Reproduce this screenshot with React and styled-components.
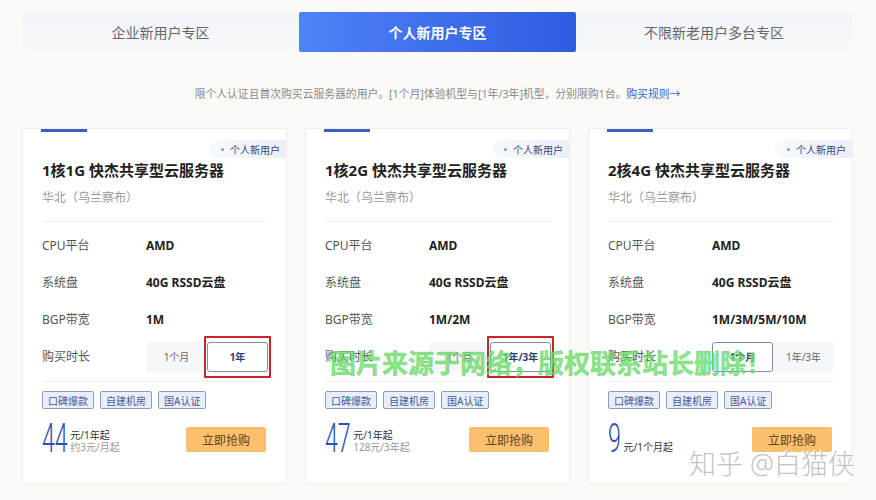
import React from 'react'
import styled, { createGlobalStyle } from 'styled-components'

const GlobalStyle = createGlobalStyle`
  body {
    margin: 0;
    background: #fbfaf7;
    font-family: 'Noto Sans', 'Noto Sans CJK SC', sans-serif;
  }
`
const Page = styled.div`
  position: relative;
  width: 876px;
  height: 500px;
  padding: 12px 23px 0 22px;
  box-sizing: border-box;
  overflow: hidden;
`
const Tabs = styled.div`
  display: grid;
  grid-template-columns: 277px 277px 1fr;
  height: 40px;
  width: 830px;
`
const Tab = styled.div`
  display: flex;
  align-items: center;
  justify-content: center;
  font-size: 14px;
  border-radius: 2px;
  color: ${(props) => (props.$active ? '#fff' : '#666')};
  font-weight: ${(props) => (props.$active ? 700 : 400)};
  background: ${(props) =>
    props.$active
      ? 'linear-gradient(90deg, #4e82f7, #2d5de0)'
      : 'linear-gradient(180deg, #f3f5fa, #f7f8fb)'};
`
const Notice = styled.p`
  margin: 34px 0 0;
  text-align: center;
  font-size: 10.8px;
  line-height: 16px;
  color: #8a8a8a;

  a {
    color: #3b64d0;
    text-decoration: none;
  }
`
const Cards = styled.div`
  display: grid;
  grid-template-columns: repeat(3, 265px);
  column-gap: 18px;
  margin-top: 26px;
`
const Card = styled.div`
  position: relative;
  background: #fff;
  border: 1px solid #f0efec;
  padding: 0 18px 29px 19px;
`
const Accent = styled.div`
  width: 46px;
  height: 3px;
  margin-left: -1px;
  background: #3d5fc4;
`
const Badge = styled.div`
  position: absolute;
  top: 11px;
  right: 0;
  height: 18px;
  padding: 0 6px 0 12px;
  display: flex;
  align-items: center;
  gap: 6px;
  border-radius: 9px 0 0 9px;
  background: linear-gradient(90deg, #f7f9fd, #eaeff9);
  font-size: 10px;
  color: #34457a;

  &::before {
    content: '';
    width: 3px;
    height: 3px;
    border-radius: 50%;
    background: #8a97b8;
  }
`
const Title = styled.h3`
  margin: 28px 0 0;
  font-size: 15px;
  line-height: 20px;
  font-weight: 700;
  color: #222;
`
const Region = styled.div`
  margin-top: 9px;
  font-size: 12px;
  line-height: 18px;
  color: #9a9a9a;
`
const Specs = styled.div`
  margin-top: 14px;
  padding: 5px 0 6px;
  border-top: 1px solid #f1f1f1;
  border-bottom: 1px solid #f1f1f1;
`
const Row = styled.div`
  display: flex;
  align-items: center;
  height: 37px;
  font-size: 12px;
  line-height: 16px;
`
const Label = styled.span`
  width: 104px;
  color: #555;
`
const Value = styled.span`
  font-weight: 700;
  color: #222;
`
const Segmented = styled.div`
  display: grid;
  grid-template-columns: 1fr 1fr;
  width: 122px;
  height: 30px;
  background: #f5f7fb;
  border-radius: 3px;
`
const Segment = styled.div`
  position: relative;
  display: flex;
  align-items: center;
  justify-content: center;
  font-size: 10px;
  border-radius: 3px;
  color: ${(props) => (props.$on ? '#2f4270' : '#666')};
  font-weight: ${(props) => (props.$on ? 700 : 400)};
  background: ${(props) => (props.$on ? '#fff' : 'transparent')};
  border: 1px solid ${(props) => (props.$on ? '#7f8db0' : 'transparent')};

  /* red highlight frame drawn around the chosen term */
  &::after {
    content: '';
    display: ${(props) => (props.$marked ? 'block' : 'none')};
    position: absolute;
    inset: -7px -4px -7px -4px;
    border: 2px solid #c4262b;
    border-radius: 1px;
  }
`
const Tags = styled.div`
  display: flex;
  gap: 6px;
  margin-top: 9px;
`
const Tag = styled.span`
  height: 16px;
  padding: 0 5px;
  display: flex;
  align-items: center;
  font-size: 10px;
  color: #3e5b9c;
  background: #e9eef8;
  border: 1px solid #8b9cc2;
  border-radius: 2px;
`
const Footer = styled.div`
  display: flex;
  align-items: flex-end;
  justify-content: space-between;
  margin-top: 15px;
  height: 30px;
`
const Price = styled.div`
  display: flex;
  align-items: flex-end;
`
const Amount = styled.span`
  display: inline-block;
  font-family: Roboto, 'Liberation Sans', sans-serif;
  font-weight: 300;
  font-size: 40px;
  line-height: 30px;
  height: 30px;
  color: #2c4fb8;
  transform: scaleX(0.58);
  transform-origin: left bottom;
  margin-right: ${(props) => 3 - props.$digits * 9.6}px;
`
const PriceNote = styled.div`
  display: flex;
  flex-direction: column;
  font-size: 10px;
  line-height: 12px;
  margin-bottom: 1px;
  color: #333;

  small {
    font-size: 10px;
    color: #999;
  }
`
const BuyButton = styled.button`
  width: 80px;
  height: 25px;
  margin-right: 2px;
  margin-bottom: 2px;
  border: none;
  border-radius: 2px;
  background: #fcbf6d;
  color: #5e4221;
  font-family: inherit;
  font-size: 12px;
`
const Watermark = styled.div`
  position: absolute;
  left: 330px;
  top: 343px;
  font-size: 26px;
  font-weight: 700;
  color: rgba(110, 226, 110, 0.82);
  -webkit-text-stroke: 0.5px rgba(70, 180, 70, 0.5);
  white-space: nowrap;
`
const Credit = styled.div`
  position: absolute;
  left: 689px;
  top: 443px;
  font-size: 27px;
  font-weight: 300;
  color: #c3c3c3;
  text-shadow: 1px 1px 0 #fff, -1px -1px 0 #fff;
  white-space: nowrap;
`

const plans = [
  {
    title: '1核1G 快杰共享型云服务器',
    disk: '40G RSSD云盘',
    bandwidth: '1M',
    options: ['1个月', '1年'],
    selected: 1,
    marked: true,
    amount: '44',
    note: '元/1年起',
    sub: '约3元/月起',
  },
  {
    title: '1核2G 快杰共享型云服务器',
    disk: '40G RSSD云盘',
    bandwidth: '1M/2M',
    options: ['1个月', '1年/3年'],
    selected: 1,
    marked: true,
    amount: '47',
    note: '元/1年起',
    sub: '128元/3年起',
  },
  {
    title: '2核4G 快杰共享型云服务器',
    disk: '40G RSSD云盘',
    bandwidth: '1M/3M/5M/10M',
    options: ['1个月', '1年/3年'],
    selected: 0,
    marked: false,
    amount: '9',
    note: '元/1个月起',
  },
]

function PlanCard({ plan }) {
  return (
    <Card>
      <Accent />
      <Badge>个人新用户</Badge>
      <Title>{plan.title}</Title>
      <Region>华北（乌兰察布）</Region>
      <Specs>
        <Row>
          <Label>CPU平台</Label>
          <Value>AMD</Value>
        </Row>
        <Row>
          <Label>系统盘</Label>
          <Value>{plan.disk}</Value>
        </Row>
        <Row>
          <Label>BGP带宽</Label>
          <Value>{plan.bandwidth}</Value>
        </Row>
        <Row>
          <Label>购买时长</Label>
          <Segmented>
            {plan.options.map((o, i) => (
              <Segment
                key={o}
                $on={i === plan.selected}
                $marked={plan.marked && i === plan.selected}
              >
                {o}
              </Segment>
            ))}
          </Segmented>
        </Row>
      </Specs>
      <Tags>
        <Tag>口碑爆款</Tag>
        <Tag>自建机房</Tag>
        <Tag>国A认证</Tag>
      </Tags>
      <Footer>
        <Price>
          <Amount $digits={plan.amount.length}>{plan.amount}</Amount>
          <PriceNote>
            <span>{plan.note}</span>
            {plan.sub && <small>{plan.sub}</small>}
          </PriceNote>
        </Price>
        <BuyButton>立即抢购</BuyButton>
      </Footer>
    </Card>
  )
}

export default function App() {
  return (
    <Page>
      <GlobalStyle />
      <Tabs>
        <Tab>企业新用户专区</Tab>
        <Tab $active>个人新用户专区</Tab>
        <Tab>不限新老用户多台专区</Tab>
      </Tabs>
      <Notice>
        限个人认证且首次购买云服务器的用户。[1个月]体验机型与[1年/3年]机型，分别限购1台。
        <a href="#rules">购买规则→</a>
      </Notice>
      <Cards>
        {plans.map((p) => (
          <PlanCard key={p.title} plan={p} />
        ))}
      </Cards>
      <Watermark>图片来源于网络，版权联系站长删除！</Watermark>
      <Credit>知乎 @白猫侠</Credit>
    </Page>
  )
}
